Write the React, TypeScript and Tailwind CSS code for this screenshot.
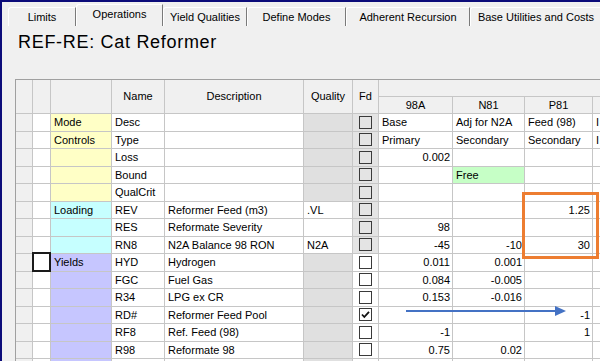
import { Fragment } from 'react'

const font = "font-['Liberation_Sans',Arial,sans-serif]"
const cols = 'grid grid-cols-[17px_18px_61px_53px_139px_49px_26px_74px_72px_68px_100px]'
const cell = 'border-r border-b border-[#c6c6c6] flex items-center overflow-hidden whitespace-nowrap'

const YELLOW = 'bg-[#ffffc6]'
const CYAN = 'bg-[#c6ffff]'
const PURPLE = 'bg-[#c6c6ff]'

type Row = {
  cat?: string
  catBg: string
  name: string
  desc?: string
  qual?: string
  qualWhite?: boolean
  fdGray?: boolean
  checked?: boolean
  vals: string[]
  greenCol?: number
  focus?: boolean
}

const rows: Row[] = [
  { cat: 'Mode', catBg: YELLOW, name: 'Desc', fdGray: true, vals: ['Base', 'Adj for N2A', 'Feed (98)', 'I'] },
  { cat: 'Controls', catBg: YELLOW, name: 'Type', fdGray: true, vals: ['Primary', 'Secondary', 'Secondary', 'I'] },
  { catBg: YELLOW, name: 'Loss', fdGray: true, vals: ['0.002', '', '', ''] },
  { catBg: YELLOW, name: 'Bound', fdGray: true, vals: ['', 'Free', '', ''], greenCol: 1 },
  { catBg: YELLOW, name: 'QualCrit', fdGray: true, vals: ['', '', '', ''] },
  { cat: 'Loading', catBg: CYAN, name: 'REV', desc: 'Reformer Feed (m3)', qual: '.VL', qualWhite: true, fdGray: true, vals: ['', '', '1.25', ''] },
  { catBg: CYAN, name: 'RES', desc: 'Reformate Severity', qualWhite: true, fdGray: true, vals: ['98', '', '', ''] },
  { catBg: CYAN, name: 'RN8', desc: 'N2A Balance 98 RON', qual: 'N2A', qualWhite: true, fdGray: true, vals: ['-45', '-10', '30', ''] },
  { cat: 'Yields', catBg: PURPLE, name: 'HYD', desc: 'Hydrogen', vals: ['0.011', '0.001', '', ''], focus: true },
  { catBg: PURPLE, name: 'FGC', desc: 'Fuel Gas', vals: ['0.084', '-0.005', '', ''] },
  { catBg: PURPLE, name: 'R34', desc: 'LPG ex CR', vals: ['0.153', '-0.016', '', ''] },
  { catBg: PURPLE, name: 'RD#', desc: 'Reformer Feed Pool', checked: true, vals: ['', '', '-1', ''] },
  { catBg: PURPLE, name: 'RF8', desc: 'Ref. Feed (98)', vals: ['-1', '', '1', ''] },
  { catBg: PURPLE, name: 'R98', desc: 'Reformate 98', vals: ['0.75', '0.02', '', ''] },
  { catBg: PURPLE, name: 'RF0', desc: 'Ref. Feed (100)', vals: ['', '', '', ''] },
]

const tabs = [
  { label: 'Limits', w: 'w-[68px]' },
  { label: 'Operations', w: 'w-[87px]', active: true },
  { label: 'Yield Qualities', w: 'w-[84px]' },
  { label: 'Define Modes', w: 'w-[99px]' },
  { label: 'Adherent Recursion', w: 'w-[124px]' },
  { label: 'Base Utilities and Costs', w: 'w-[132px]' },
]

function CheckBox({ checked }: { checked?: boolean }) {
  return (
    <span className="w-[13px] h-[13px] border border-[#3a3a3a] flex items-center justify-center">
      {checked && (
        <svg width="11" height="11" viewBox="0 0 11 11">
          <path d="M2 5.5 L4.3 8 L9 2.8" fill="none" stroke="#111" strokeWidth="1.8" />
        </svg>
      )}
    </span>
  )
}

const isNum = (s: string) => /^-?[\d.]+$/.test(s)

export default function App() {
  return (
    <div className={`relative w-[600px] h-[361px] overflow-hidden bg-[#0c0c7a] pt-[2px] pl-[2px] text-[11px] text-black ${font}`}>
      <div className="h-full bg-[#f0f0f0]">
        {/* Tabs */}
        <div className="h-[24px] flex items-end pl-[6px]">
          {tabs.map((t) => (
            <div
              key={t.label}
              className={`${t.w} shrink-0 flex items-center justify-center whitespace-nowrap border-t border-l border-white border-r border-r-[#7a7a7a] rounded-tl-[3px] ${
                t.active ? 'h-[22px] pb-[2px]' : 'h-[19px]'
              }`}
            >
              {t.label}
            </div>
          ))}
        </div>

        {/* Title */}
        <div className="h-[53px] pt-[7px] pl-[16px]">
          <div className="text-[18px] leading-[18px] tracking-[0.7px]">REF-RE: Cat Reformer</div>
        </div>

        {/* Grid */}
        <div className="ml-[13px] border-l border-t border-[#a0a0a0] w-max">
          <div className={`${cols} grid-rows-[17px_17px] bg-[#f0f0f0]`}>
            <div className={`${cell} row-span-2`} />
            <div className={`${cell} row-span-2`} />
            <div className={`${cell} row-span-2`} />
            <div className={`${cell} row-span-2 justify-center`}>Name</div>
            <div className={`${cell} row-span-2 justify-center`}>Description</div>
            <div className={`${cell} row-span-2 justify-center`}>Quality</div>
            <div className={`${cell} row-span-2 justify-center`}>Fd</div>
            <div className="col-span-4 border-b border-[#c6c6c6]" />
            <div className={`${cell} justify-center`}>98A</div>
            <div className={`${cell} justify-center`}>N81</div>
            <div className={`${cell} justify-center`}>P81</div>
            <div className={cell} />
          </div>

          <div className={`${cols} auto-rows-[17.5px] bg-white`}>
            {rows.map((r) => (
              <Fragment key={r.name}>
                <div className={`${cell} bg-[#f0f0f0]`} />
                <div className={`${cell} relative overflow-visible`}>
                  {r.focus && (
                    <span className="absolute -left-[1px] -top-[2px] right-[-1px] bottom-[-1px] border-2 border-[#1a1a1a]" />
                  )}
                </div>
                <div className={`${cell} ${r.catBg} pl-[3px]`}>{r.cat}</div>
                <div className={`${cell} pl-[3px]`}>{r.name}</div>
                <div className={`${cell} pl-[3px]`}>{r.desc}</div>
                <div className={`${cell} pl-[3px] ${r.qualWhite ? 'bg-white' : 'bg-[#e0e0e0]'}`}>{r.qual}</div>
                <div className={`${cell} justify-center ${r.fdGray ? 'bg-[#e4e4e4]' : 'bg-white'}`}>
                  <CheckBox checked={r.checked} />
                </div>
                {r.vals.map((v, i) => (
                  <div
                    key={i}
                    className={`${cell} ${isNum(v) ? 'justify-end pr-[2px]' : 'pl-[3px]'} ${
                      r.greenCol === i ? 'bg-[#c6ffc6]' : ''
                    }`}
                  >
                    {v}
                  </div>
                ))}
              </Fragment>
            ))}
          </div>
        </div>
      </div>

      {/* Annotations */}
      <div className="absolute left-[522px] top-[192px] w-[77px] h-[67px] border-[3px] border-[#ed7d31]" />
      <svg className="absolute left-[400px] top-[304px]" width="172" height="14" viewBox="0 0 172 14">
        <line x1="6" y1="7" x2="158" y2="7" stroke="#4472c4" strokeWidth="2" />
        <path d="M155 2 L166 7 L155 12 Z" fill="#4472c4" />
      </svg>
    </div>
  )
}
